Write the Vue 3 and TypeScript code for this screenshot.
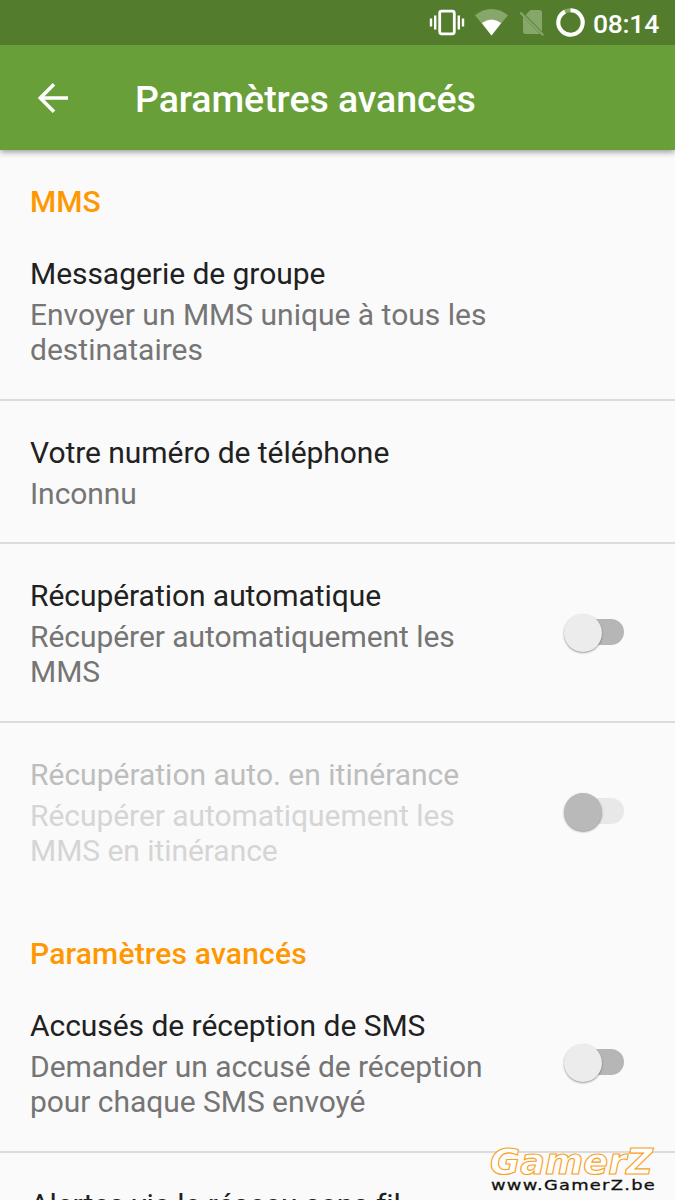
<script setup lang="ts">
interface Row {
  id: string
  title: string
  lines: string[]
  toggle?: boolean
  disabled?: boolean
  divider?: boolean
}
interface Section {
  id: string
  label: string
  rows: Row[]
}

const sections: Section[] = [
  {
    id: 'mms',
    label: 'MMS',
    rows: [
      { id: 'group', title: 'Messagerie de groupe', lines: ['Envoyer un MMS unique à tous les', 'destinataires'], divider: true },
      { id: 'phone', title: 'Votre numéro de téléphone', lines: ['Inconnu'], divider: true },
      { id: 'auto', title: 'Récupération automatique', lines: ['Récupérer automatiquement les', 'MMS'], toggle: true, divider: true },
      { id: 'roaming', title: 'Récupération auto. en itinérance', lines: ['Récupérer automatiquement les', 'MMS en itinérance'], toggle: true, disabled: true },
    ],
  },
  {
    id: 'advanced',
    label: 'Paramètres avancés',
    rows: [
      { id: 'sms', title: 'Accusés de réception de SMS', lines: ['Demander un accusé de réception', 'pour chaque SMS envoyé'], toggle: true, divider: true },
      { id: 'alerts', title: 'Alertes via le réseau sans fil', lines: [] },
    ],
  },
]
</script>

<template>
  <div class="screen">
    <div class="status">
      <svg class="icons" width="160" height="45" viewBox="427 0 160 45" fill="none">
        <rect x="439.700" y="11.200" width="14.600" height="22.600" rx="2" stroke="#fff" stroke-width="2.800" />
        <path d="M431 18.500v8M435.200 15.500v14M458.800 15.500v14M463 18.500v8" stroke="#fff" stroke-width="2.400" />
        <path d="M475 15.200Q491.500 2.800 508 15.200L491.500 35.500Z" fill="#87a76a" />
        <path d="M481.800 23Q491.500 15.800 501.200 23L491.500 35.500Z" fill="#fff" />
        <path d="M530.500 10H539.500Q542 10 542 12.500V31.500L525.600 15ZM523 16.800L540 34H525.500Q523 34 523 31.500Z" fill="#87a76a" />
        <path d="M520.300 12.500L543.300 35.300" stroke="#87a76a" stroke-width="2.200" />
        <circle cx="570.500" cy="22.500" r="12.200" stroke="#87a76a" stroke-width="4" />
        <path d="M570.500 10.300A12.200 12.200 0 1 1 565 11.600" stroke="#fff" stroke-width="4" />
      </svg>
      <span class="clock">08:14</span>
    </div>
    <header class="bar">
      <svg class="back" width="32" height="32" viewBox="0 0 32 32" fill="none" stroke="#fff" stroke-width="3.600">
        <path d="M31 16H3.500M17 2.300L3.300 16L17 29.700" />
      </svg>
      <h1>Paramètres avancés</h1>
    </header>
    <main>
      <section v-for="s in sections" :key="s.id" :class="s.id">
        <h2>{{ s.label }}</h2>
        <div v-for="r in s.rows" :key="r.id" class="row" :class="[r.id, { disabled: r.disabled, divider: r.divider }]">
          <div class="text">
            <div class="title">{{ r.title }}</div>
            <div v-for="l in r.lines" :key="l" class="line">{{ l }}</div>
          </div>
          <div v-if="r.toggle" class="switch"><i class="thumb"></i></div>
        </div>
      </section>
    </main>
    <svg class="mark" width="185" height="60" viewBox="485 1140 185 60">
      <text x="490" y="1174" textLength="163" lengthAdjust="spacingAndGlyphs" class="brand">GamerZ</text>
      <text x="491" y="1189.500" textLength="165" lengthAdjust="spacingAndGlyphs" class="site">www.GamerZ.be</text>
    </svg>
  </div>
</template>

<style>
body {
  margin: 0;
  background: #fafafa;
}
</style>

<style scoped>
.screen {
  position: relative;
  width: 675px;
  height: 1200px;
  overflow: hidden;
  background: #fafafa;
  color: #212121;
  font: 400 30px/35px Roboto, sans-serif;
}
.status {
  position: relative;
  z-index: 1;
  display: flex;
  height: 45px;
  padding-left: 427px;
  background: #537d2d;
  color: #fff;
}
.clock {
  margin-left: 6px;
  font-size: 26.500px;
  font-weight: 500;
  line-height: 47px;
  letter-spacing: -0.250px;
  white-space: nowrap;
}
.bar {
  position: relative;
  display: flex;
  align-items: center;
  height: 105px;
  background: #689f38;
  color: #fff;
  box-shadow: 0 2px 6px rgba(0, 0, 0, 0.4);
}
.back {
  margin-left: 37px;
}
h1 {
  margin: 3px 0 0 66px;
  font-size: 37.500px;
  font-weight: 500;
  line-height: 44px;
  letter-spacing: -0.060px;
  white-space: nowrap;
}
h2 {
  box-sizing: border-box;
  height: 72px;
  margin: 0;
  padding: 34px 30px 0;
  color: #ff9800;
  font-size: 30px;
  font-weight: 500;
  line-height: 35px;
}
.advanced h2 {
  letter-spacing: 0.180px;
}
.row {
  box-sizing: border-box;
  display: flex;
  justify-content: space-between;
  height: 179px;
  padding: 34px 51px 0 30px;
}
.row.phone {
  height: 143px;
}
.divider {
  border-bottom: 2px solid #dcdcdc;
}
.text {
  letter-spacing: -0.050px;
  white-space: nowrap;
}
.group .line,
.roaming .title {
  letter-spacing: 0;
}
.title {
  margin-bottom: 6px;
}
.line {
  color: #757575;
}
.disabled .title {
  color: #bdbdbd;
}
.disabled .line {
  color: #d5d5d5;
}
.switch {
  position: relative;
  width: 53px;
  height: 26px;
  margin-top: 41px;
  border-radius: 13px;
  background: #b6b6b6;
}
.thumb {
  position: absolute;
  left: -7px;
  top: -5px;
  width: 38px;
  height: 38px;
  border-radius: 50%;
  background: #ececec;
  box-shadow: 0 1px 2px rgba(0, 0, 0, 0.4);
}
.disabled .switch {
  background: #e8e8e8;
}
.disabled .thumb {
  background: #b9b9b9;
}
.mark {
  position: absolute;
  left: 485px;
  top: 1140px;
}
.brand {
  fill: #fff;
  stroke: #f9a11b;
  stroke-width: 1.100px;
  font: italic bold 35px "DejaVu Sans", sans-serif;
}
.site {
  fill: #111;
  stroke: #111;
  stroke-width: 0.300px;
  font: 14px "DejaVu Sans", sans-serif;
  letter-spacing: 1px;
}
</style>
